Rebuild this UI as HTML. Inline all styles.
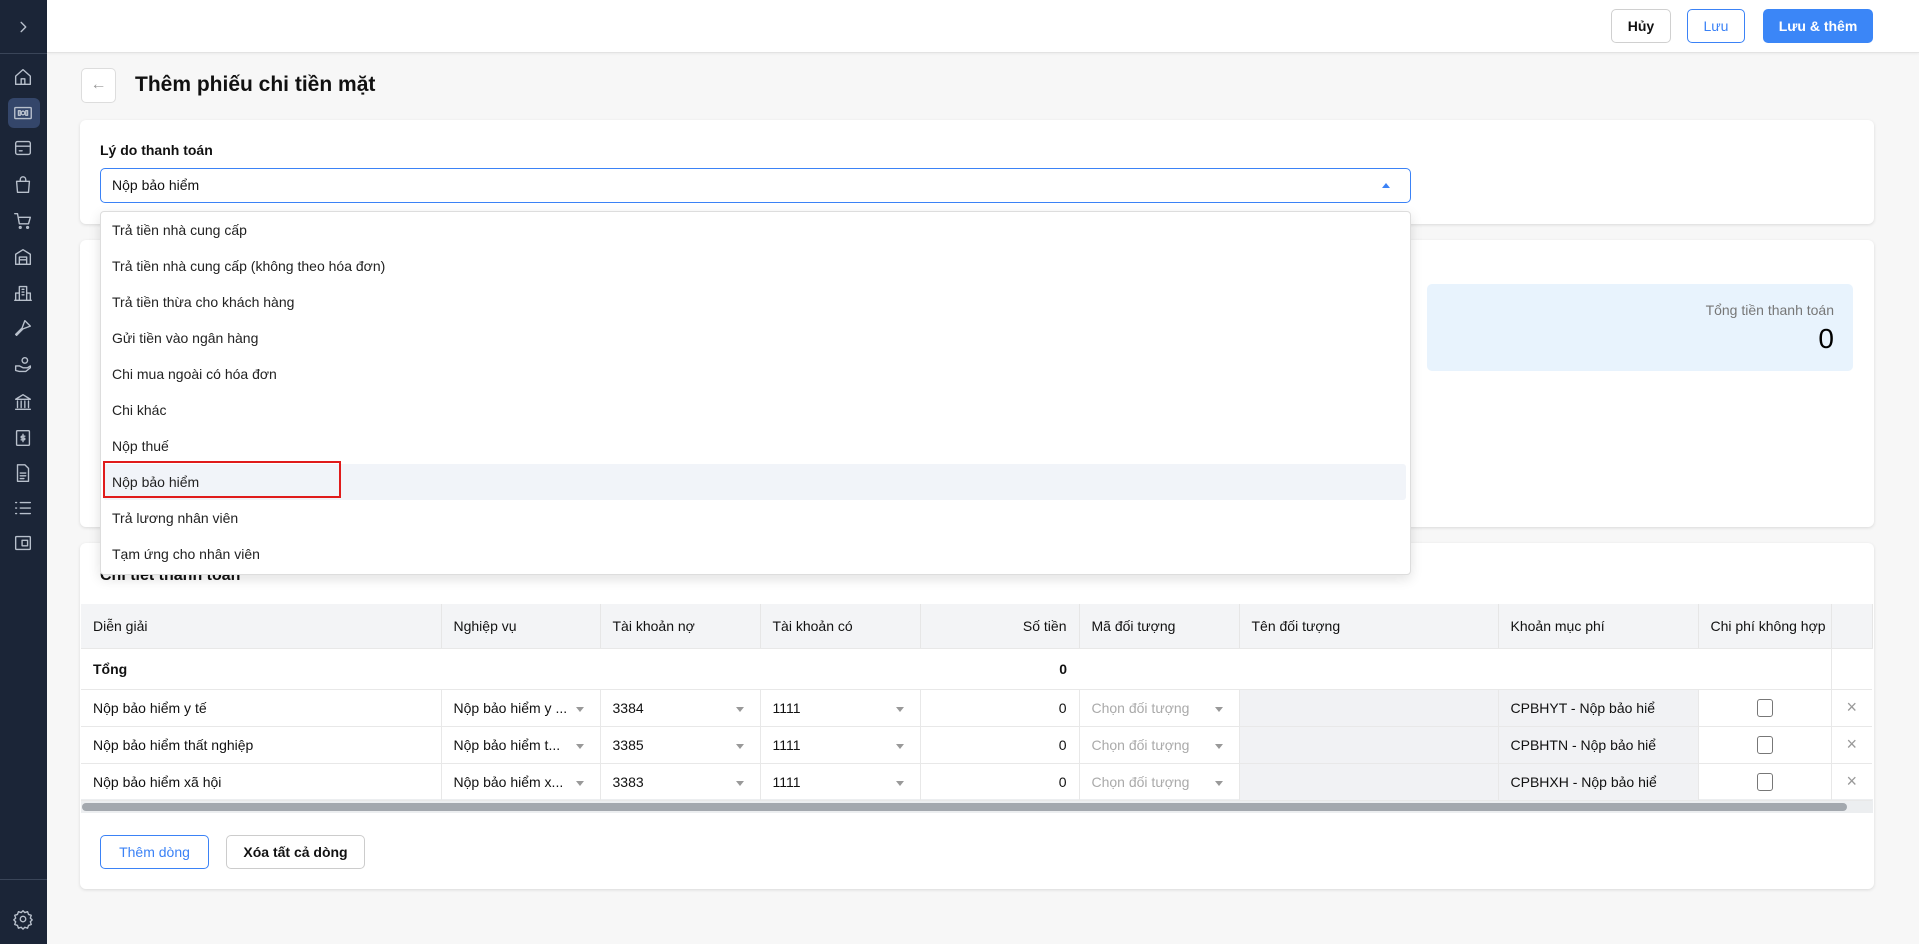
<!DOCTYPE html>
<html><head><meta charset="utf-8"><style>
*{box-sizing:border-box;margin:0;padding:0}
body{width:1919px;height:944px;overflow:hidden;background:#f7f7f7;font-family:"Liberation Sans",sans-serif;color:#111;font-size:14px;position:relative}
.side{position:absolute;left:0;top:0;width:47px;height:944px;background:#1b2537}
.side .ic{position:absolute;left:12px;width:22px;height:22px}
.side svg{stroke:#b8c0cc;fill:none;stroke-width:1.5;stroke-linecap:round;stroke-linejoin:round}
.top{position:absolute;left:47px;top:0;right:0;height:53px;background:#fff;border-bottom:1px solid #e3e3e3;box-shadow:0 1px 2px rgba(0,0,0,.05)}
.btn{position:absolute;border-radius:5px;font-size:14px;font-weight:bold;display:flex;align-items:center;justify-content:center}
.card{position:absolute;left:80px;width:1794px;background:#fff;border-radius:6px;box-shadow:0 1px 3px rgba(0,0,0,.12)}
.abs{position:absolute}
table{border-collapse:collapse;table-layout:fixed;position:absolute;left:81px;top:604px;width:1791px}
td{height:37px;border-bottom:1px solid #e8e8e8;border-right:1px solid #e8e8e8;padding:0 12px;font-size:14px;white-space:nowrap;overflow:hidden;position:relative}
tr.h td{height:44px;background:#f3f4f6;border-right:1px solid #e6e6e6}
tr.t td{height:41px;font-weight:bold;border-right:none}
.car::after{content:"";position:absolute;right:16px;top:17px;border:4px solid transparent;border-top:5px solid #999;border-bottom:0}
.gray{background:#f1f2f4}
.cb{display:inline-block;width:16px;height:18px;border:1.5px solid #777;border-radius:3px;vertical-align:middle}
.dd{position:absolute;left:100px;top:211px;width:1311px;height:364px;background:#fff;border:1px solid #ddd;border-radius:4px;box-shadow:0 4px 12px rgba(0,0,0,.12)}
.dd div{height:36px;line-height:36px;padding-left:11px;font-size:14px;color:#222}
</style></head><body>
<div class="side">
<svg class="ic" style="top:16px" viewBox="0 0 24 24"><path d="M10 7l5 5-5 5"/></svg>
<div class="abs" style="left:0;top:53px;width:47px;height:1px;background:#3a4558"></div>
<div class="abs" style="left:8px;top:98px;width:32px;height:30px;background:#34466a;border-radius:6px"></div>
<svg class="ic" style="top:66px" viewBox="0 0 24 24"><path d="M4 11l8-7 8 7v9H4z"/><path d="M10 20v-6h4v6"/></svg>
<svg class="ic" style="top:102px" viewBox="0 0 24 24"><rect x="3" y="6" width="18" height="12" rx="1"/><rect x="7" y="9.5" width="2" height="5"/><circle cx="12" cy="12" r="2"/><rect x="15" y="9.5" width="2" height="5"/></svg>
<svg class="ic" style="top:137px" viewBox="0 0 24 24"><rect x="4" y="5" width="16" height="14" rx="2"/><path d="M4 10h16M8 15h3"/></svg>
<svg class="ic" style="top:174px" viewBox="0 0 24 24"><path d="M5 8h14l-1 12H6z"/><path d="M9 8V6a3 3 0 016 0v2"/></svg>
<svg class="ic" style="top:210px" viewBox="0 0 24 24"><path d="M3 4h3l2 11h10l2-7H8"/><circle cx="9" cy="19" r="1"/><circle cx="17" cy="19" r="1"/></svg>
<svg class="ic" style="top:246px" viewBox="0 0 24 24"><path d="M4 20V9l8-5 8 5v11z"/><path d="M8 12h8v8H8zM8 15h8"/></svg>
<svg class="ic" style="top:282px" viewBox="0 0 24 24"><path d="M8 20V5h8v15M4 20v-8h4M16 12h4v8M3 20h18M11 8h2M11 11h2M11 14h2"/></svg>
<svg class="ic" style="top:317px" viewBox="0 0 24 24"><path d="M14 4l6 6-8 3-3 3-4 4-1-1 4-4 3-3z"/></svg>
<svg class="ic" style="top:354px" viewBox="0 0 24 24"><circle cx="14" cy="7" r="3"/><path d="M4 13h4l4 2h5l3-2v2l-5 4H8l-4-1z"/></svg>
<svg class="ic" style="top:391px" viewBox="0 0 24 24"><path d="M4 9l8-5 8 5zM6 11v7M10 11v7M14 11v7M18 11v7M4 20h16"/></svg>
<svg class="ic" style="top:427px" viewBox="0 0 24 24"><rect x="5" y="4" width="14" height="16" rx="1"/><path d="M12 8v8M14 10h-3a1 1 0 000 2h2a1 1 0 010 2h-3"/></svg>
<svg class="ic" style="top:462px" viewBox="0 0 24 24"><path d="M6 3h8l4 4v14H6z"/><path d="M9 12h6M9 15h6M9 18h4"/></svg>
<svg class="ic" style="top:497px" viewBox="0 0 24 24"><path d="M9 6h11M9 12h11M9 18h11M4 6h1M4 12h1M4 18h1"/></svg>
<svg class="ic" style="top:532px" viewBox="0 0 24 24"><rect x="4" y="5" width="16" height="14" rx="1"/><rect x="11" y="9" width="6" height="6"/></svg>
<div class="abs" style="left:0;top:879px;width:47px;height:1px;background:#3a4558"></div>
<svg class="ic" style="top:908px" viewBox="0 0 24 24"><circle cx="12" cy="12" r="3"/><path d="M12 3l2 2 3-1 1 3 3 1-1 3 2 2-2 2 1 3-3 1-1 3-3-1-2 2-2-2-3 1-1-3-3-1 1-3-2-2 2-2-1-3 3-1 1-3 3 1z"/></svg>
</div>
<div class="top">
<div class="btn" style="left:1564px;top:9px;width:60px;height:34px;border:1px solid #d0d0d0;color:#111">Hủy</div>
<div class="btn" style="left:1640px;top:9px;width:58px;height:34px;border:1px solid #3b82f6;color:#3b82f6;font-weight:normal">Lưu</div>
<div class="btn" style="left:1716px;top:9px;width:110px;height:34px;background:#3b86f7;color:#fff">Lưu &amp; thêm</div>
</div>
<div class="abs" style="left:81px;top:68px;width:35px;height:35px;border:1px solid #ddd;border-radius:5px;background:#fff;color:#999;text-align:center;line-height:32px;font-size:16px">←</div>
<div class="abs" style="left:135px;top:73px;font-size:21px;font-weight:bold;color:#111">Thêm phiếu chi tiền mặt</div>
<div class="card" style="top:120px;height:104px">
<div class="abs" style="left:20px;top:22px;font-size:14px;font-weight:bold">Lý do thanh toán</div>
<div class="abs" style="left:20px;top:48px;width:1311px;height:35px;border:1px solid #3b82f6;border-radius:5px;padding-left:11px;line-height:33px;font-size:14px">Nộp bảo hiểm<span style="position:absolute;right:20px;top:14px;border:4px solid transparent;border-bottom:5px solid #3b82f6;border-top:0"></span></div>
</div>
<div class="card" style="top:240px;height:287px">
<div class="abs" style="left:1347px;top:44px;width:426px;height:87px;background:#e8f3fd;border-radius:5px">
<div class="abs" style="right:19px;top:18px;font-size:14px;color:#777">Tổng tiền thanh toán</div>
<div class="abs" style="right:19px;top:39px;font-size:28px;color:#000">0</div>
</div>
</div>
<div class="card" style="top:543px;height:346px">
<div class="abs" style="left:20px;top:24px;font-size:16px;font-weight:bold">Chi tiết thanh toán</div>
<div class="abs" style="left:1px;top:256px;width:1792px;height:14px;background:#eceef0"></div>
<div class="abs" style="left:2px;top:260px;width:1765px;height:8px;background:#a3a8ae;border-radius:4px"></div>
<div class="btn" style="left:20px;top:292px;width:109px;height:34px;border:1px solid #3b82f6;color:#3b82f6;font-weight:normal">Thêm dòng</div>
<div class="btn" style="left:146px;top:292px;width:139px;height:34px;border:1px solid #ccc;color:#111">Xóa tất cả dòng</div>
</div>
<table>
<colgroup><col style="width:360px"><col style="width:159px"><col style="width:160px"><col style="width:160px"><col style="width:159px"><col style="width:160px"><col style="width:259px"><col style="width:200px"><col style="width:133px"><col style="width:41px"></colgroup>
<tr class="h"><td>Diễn giải</td><td>Nghiệp vụ</td><td>Tài khoản nợ</td><td>Tài khoản có</td><td style="text-align:right">Số tiền</td><td>Mã đối tượng</td><td>Tên đối tượng</td><td>Khoản mục phí</td><td>Chi phí không hợp</td><td></td></tr>
<tr class="t"><td>Tổng</td><td></td><td></td><td></td><td style="text-align:right">0</td><td></td><td></td><td></td><td></td><td style="border-left:1px solid #e8e8e8"></td></tr>
<tr><td>Nộp bảo hiểm y tế</td><td class="car">Nộp bảo hiểm y ...</td><td class="car">3384</td><td class="car">1111</td><td style="text-align:right">0</td><td class="car" style="color:#aaa">Chọn đối tượng</td><td class="gray"></td><td class="gray">CPBHYT - Nộp bảo hiể</td><td style="text-align:center"><span class="cb"></span></td><td style="color:#999;font-size:18px;text-align:center;padding:0;border-right:none">×</td></tr>
<tr><td>Nộp bảo hiểm thất nghiệp</td><td class="car">Nộp bảo hiểm t...</td><td class="car">3385</td><td class="car">1111</td><td style="text-align:right">0</td><td class="car" style="color:#aaa">Chọn đối tượng</td><td class="gray"></td><td class="gray">CPBHTN - Nộp bảo hiể</td><td style="text-align:center"><span class="cb"></span></td><td style="color:#999;font-size:18px;text-align:center;padding:0;border-right:none">×</td></tr>
<tr><td>Nộp bảo hiểm xã hội</td><td class="car">Nộp bảo hiểm x...</td><td class="car">3383</td><td class="car">1111</td><td style="text-align:right">0</td><td class="car" style="color:#aaa">Chọn đối tượng</td><td class="gray"></td><td class="gray">CPBHXH - Nộp bảo hiể</td><td style="text-align:center"><span class="cb"></span></td><td style="color:#999;font-size:18px;text-align:center;padding:0;border-right:none">×</td></tr>
</table>
<div class="dd">
<div>Trả tiền nhà cung cấp</div>
<div>Trả tiền nhà cung cấp (không theo hóa đơn)</div>
<div>Trả tiền thừa cho khách hàng</div>
<div>Gửi tiền vào ngân hàng</div>
<div>Chi mua ngoài có hóa đơn</div>
<div>Chi khác</div>
<div>Nộp thuế</div>
<div style="background:#f1f4f9;margin:0 4px 0 2px;padding-left:9px;border-radius:3px;position:relative">Nộp bảo hiểm<span style="position:absolute;left:0;top:-3px;width:238px;height:37px;border:2px solid #e01b1b"></span></div>
<div>Trả lương nhân viên</div>
<div>Tạm ứng cho nhân viên</div>
</div>
</body></html>
